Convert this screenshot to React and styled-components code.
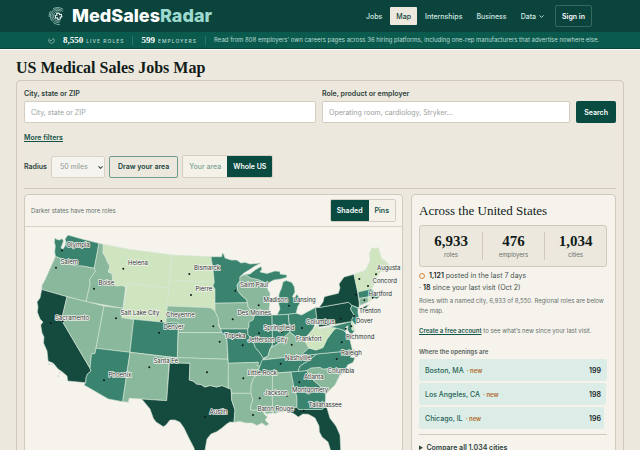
import React, { useState } from "react";
import styled, { createGlobalStyle } from "styled-components";
import { ChevronDown } from "lucide-react";

const sans = `Inter, "Liberation Sans", sans-serif`;
const serif = `"Liberation Serif", Georgia, serif`;

const GlobalStyle = createGlobalStyle`
  * {
    box-sizing: border-box;
  }
  body {
    margin: 0;
    background: #ede8dd;
    font-family: ${sans};
    color: #16332e;
  }
  button, input, select {
    font-family: inherit;
    margin: 0;
  }
  h1, h2, h3, p, dl, dd, ul {
    margin: 0;
    padding: 0;
  }
`;

const Page = styled.div`
  height: 100vh;
  overflow-y: auto;
  scrollbar-width: none;
`;

const Header = styled.header`
  display: flex;
  align-items: center;
  justify-content: space-between;
  height: 32px;
  padding: 0 48px;
  background: #0a443c;
`;

const Brand = styled.a`
  display: flex;
  align-items: center;
  gap: 6px;
  font-size: 18px;
  line-height: 22px;
  font-weight: 800;
  color: #fff;
  text-decoration: none;

  span span {
    color: #9ed9d0;
  }
`;

const Nav = styled.nav`
  display: flex;
  align-items: center;
  gap: 2px;
`;

const NavLink = styled.a`
  display: flex;
  align-items: center;
  gap: 2px;
  height: 18px;
  padding: 0 6px;
  border-radius: 1px;
  font-size: 7px;
  font-weight: 500;
  text-decoration: none;
  color: ${(props) => (props.$active ? "#0a443c" : "#d3e8e2")};
  background: ${(props) => (props.$active ? "#ede8dd" : "transparent")};
`;

const SignIn = styled.button`
  height: 22px;
  margin-left: 2px;
  padding: 0 6px;
  border: 1px solid #34695f;
  border-radius: 2px;
  background: transparent;
  color: #fff;
  font-size: 7px;
  font-weight: 600;
`;

const Strip = styled.div`
  display: flex;
  align-items: center;
  height: 17px;
  padding: 0 48px;
  background: #0b5a4e;
  border-bottom: 1px solid #0a443c;
  box-shadow: 0 1px 0 #fbfaf6;
  color: #b9dad2;
  white-space: nowrap;

  svg {
    flex: none;
  }
`;

const StripStat = styled.div`
  display: flex;
  align-items: baseline;
  gap: 3px;
  margin-left: 8px;
  padding-right: 8px;
  border-right: 1px solid #2c7468;
  font-size: 5px;
  line-height: 8px;
  font-weight: 500;
  letter-spacing: 1px;
  text-transform: uppercase;

  strong {
    font-family: ${serif};
    font-size: 9px;
    letter-spacing: 0;
    color: #fff;
  }
`;

const StripNote = styled.p`
  margin-left: 8px;
  font-size: 6px;
  line-height: 8px;
`;

const Main = styled.main`
  padding: 8px 16px 16px;
`;

const Title = styled.h1`
  margin-bottom: 1px;
  font-family: ${serif};
  font-size: 16px;
  line-height: 22px;
  font-weight: 700;
  color: #111c1a;
`;

const Shell = styled.section`
  padding: 8px 7px;
  border: 1px solid #cfcabb;
  border-radius: 4px;
`;

const SearchRow = styled.form`
  display: grid;
  grid-template-columns: 293fr 249fr auto;
  align-items: end;
  column-gap: 6px;
`;

const Field = styled.div`
  display: flex;
  flex-direction: column;
  gap: 3px;
`;

const Label = styled.label`
  font-size: 7px;
  line-height: 9px;
  font-weight: 600;
  color: #2b3f3b;
`;

const TextInput = styled.input`
  width: 100%;
  height: 22px;
  padding: 0 6px;
  border: 1px solid #d3cebf;
  border-radius: 2px;
  background: #fff;
  font-size: 7px;

  &::placeholder {
    color: #9aa19d;
  }
`;

const PrimaryButton = styled.button`
  height: 22px;
  padding: 0 8px;
  border: 0;
  border-radius: 2px;
  background: #0a4b41;
  color: #fff;
  font-size: 7px;
  font-weight: 600;
`;

const MoreFilters = styled.a`
  display: block;
  width: fit-content;
  margin-top: 10px;
  font-size: 7px;
  line-height: 10px;
  font-weight: 600;
  color: #14534a;
`;

const Controls = styled.div`
  display: flex;
  align-items: center;
  gap: 4px;
  margin-top: 12px;
  padding-bottom: 10px;
  border-bottom: 1px solid #cfcabb;
`;

const SelectBox = styled.div`
  position: relative;
  width: 54px;
  height: 22px;

  svg {
    position: absolute;
    right: 1px;
    top: 8px;
    pointer-events: none;
    color: #4d5855;
  }
`;

const Select = styled.select`
  display: block;
  appearance: none;
  width: 100%;
  height: 22px;
  padding: 0 8px;
  border: 1px solid #d8d3c6;
  border-radius: 2px;
  background: #f6f4ef;
  color: #8c9692;
  font-size: 7px;
  opacity: 1;
`;

const DrawButton = styled.button`
  height: 22px;
  padding: 0 8px;
  border: 1px solid #6f9a90;
  border-radius: 2px;
  background: transparent;
  color: #14443c;
  font-size: 7px;
  font-weight: 600;
`;

const Toggle = styled.div`
  display: flex;
  border: 1px solid #d3cebf;
  border-radius: 2px;
  overflow: hidden;
`;

const ToggleButton = styled.button`
  height: 21px;
  padding: 0 6px;
  border: 0;
  font-size: 7px;
  font-weight: ${(props) => (props.$muted ? 500 : 600)};
  color: ${(props) =>
    props.$on ? "#fff" : props.$muted ? "#7da398" : "#14534a"};
  background: ${(props) => (props.$on ? "#0a4b41" : "#f4f1e8")};
`;

const Columns = styled.div`
  display: grid;
  grid-template-columns: minmax(0, 1fr) 205px;
  gap: 8px;
  align-items: start;
  margin-top: 5px;
`;

const Card = styled.section`
  border: 1px solid #cfcabb;
  border-radius: 4px;
  background: #f6f3ec;
  overflow: hidden;
`;

const MapHead = styled.div`
  display: flex;
  align-items: center;
  justify-content: space-between;
  height: 32px;
  padding: 0 6px;
  border-bottom: 1px solid #d8d3c6;
  font-size: 6px;
  color: #66706d;
`;

const MapSvg = styled.svg`
  display: block;
  width: 100%;
  height: auto;

  text {
    font-family: ${sans};
    font-size: 6px;
    fill: #2b3432;
    stroke: #f3f3ee;
    stroke-width: 1.5px;
    stroke-linejoin: round;
    paint-order: stroke;
  }
`;

const Side = styled(Card)`
  padding: 8px 8px 12px 7px;
`;

const SideTitle = styled.h2`
  font-family: ${serif};
  font-size: 13px;
  line-height: 16px;
  font-weight: 400;
  color: #111c1a;
`;

const Stats = styled.dl`
  display: grid;
  grid-template-columns: repeat(3, 1fr);
  margin-top: 6px;
  padding: 6px 0;
  border: 1px solid #cfcabb;
  border-radius: 3px;
  background: #ede8dd;
`;

const Stat = styled.div`
  display: flex;
  flex-direction: column-reverse;
  text-align: center;

  & + & {
    border-left: 1px solid #cfcabb;
  }

  dt {
    font-size: 6px;
    line-height: 10px;
    color: #66706d;
  }

  dd {
    font-family: ${serif};
    font-size: 15px;
    line-height: 18px;
    font-weight: 700;
    color: #111c1a;
  }
`;

const Recent = styled.div`
  margin-top: 3px;
`;

const Line = styled.p`
  display: flex;
  align-items: center;
  font-size: 7px;
  line-height: 12px;
  white-space: pre;
  color: #44524e;

  strong {
    font-weight: 600;
    color: #16211f;
  }
`;

const Pulse = styled.span`
  width: 6px;
  height: 6px;
  margin-right: 4px;
  border: 1px solid #d9873a;
  border-radius: 50%;
`;

const Note = styled.p`
  margin-top: ${(props) => props.$space}px;
  font-size: 6px;
  line-height: 10px;
  color: #66706d;

  a {
    font-weight: 600;
    color: #14534a;
  }
`;

const ListTitle = styled.h3`
  margin-top: 11px;
  font-size: 6px;
  line-height: 10px;
  font-weight: 600;
  color: #55615d;
`;

const Cities = styled.ul`
  display: grid;
  gap: 2px;
  margin-top: 2px;
  padding-bottom: 5px;
  border-bottom: 1px solid #cfcabb;
  list-style: none;
`;

const City = styled.li`
  position: relative;
  height: 22px;
`;

const Bar = styled.div`
  height: 100%;
  border-radius: 2px;
  background: #dcede7;
`;

const CityLink = styled.a`
  position: absolute;
  inset: 0;
  display: flex;
  align-items: center;
  gap: 3px;
  padding: 0 6px;
  font-size: 7px;
  font-weight: 500;
  text-decoration: none;
  color: #1f6254;

  em {
    font-size: 6px;
    font-style: normal;
    font-weight: 600;
    color: #b0692c;
  }

  strong {
    margin-left: auto;
    font-weight: 600;
    color: #16211f;
  }
`;

const Compare = styled.details`
  margin-top: 8px;
  font-size: 7px;
  line-height: 10px;
  font-weight: 600;
  color: #2b3f3b;
`;

const shades = ["#cfe5bf", "#8ab89c", "#3a846f", "#144b3e"];

// [abbreviation, shade, outline]
const states = [
  ["WA", 2, "55,238 57,239.5 60,240 62,238.5 63.5,241 62,245 61,248 63,249 65,246 66,242 65,239 66.5,237 68,235 82,239 99,243.3 94.3,268.3 82,266 76,266 70,264 65,263.5 62,259 55.5,256.5 54.7,252 55.3,246 54.3,242"],
  ["OR", 1, "55.5,256.5 62,259 65,263.5 70,264 76,266 82,266 94.3,268.3 95.5,271 93,275 89.3,280 90.3,283 86,301.7 67,296.7 41.7,289.5 42,285 45,280 49,271 53,262"],
  ["ID", 1, "99,243.3 103.3,244.3 103,253 106,258 107.5,262 110,266 108.3,272 112,273.5 113,281 115.5,286 122,285.5 125.7,286.7 123,308.3 86,301.7 90.3,283 89.3,280 95.5,271 94.3,268.3"],
  ["MT", 0, "103.3,244.3 130,249.5 160,253.3 171.7,255 169,288.3 127.3,283.3 125.7,286.7 122,285.5 115.5,286 113,281 112,273.5 108.3,272 110,266 107.5,262 106,258 103,253"],
  ["WY", 0, "127.3,283.3 169,288.3 166,322.5 121.7,317.7"],
  ["CA", 3, "41.7,289.5 67,296.7 61.5,320 90,368.3 91,371 87.5,374 86,378 85.7,382.7 67.7,381 67,376 62,371.7 58,369 53.3,363.3 48,361 47.7,357 47,351 43.5,343 44,337 42,333 40.7,325 43,322 40,319 37.3,312 38,307 37,302 40,298"],
  ["NV", 1, "67,296.7 104,306 96,348.3 95,353.5 91.5,354 90,368.3 61.5,320"],
  ["UT", 1, "104,306 123,308.3 121.7,317.7 133.7,319.5 130,352.3 96,348.3"],
  ["CO", 2, "133.7,319.3 166,322.5 178.3,322.9 177.3,357.7 130,352.3"],
  ["AZ", 2, "96,348.3 130,352.3 122.7,401.7 108.3,399 84,385 86,382 86,378 87.5,374 91,371 90,368.3 91.5,354 95,353.5"],
  ["NM", 1, "130,352.3 170,357.3 169,363 166.7,400.7 141.7,399 129,398.3 128.5,402.3 122.7,401.7"],
  ["TX", 3, "169.5,362.7 190,363.3 189.3,380 193,381 196.7,384 201,384.5 205,387 210,385.5 216.7,387 222,385.5 231,389 231.7,400 235,410 234,422.3 230,422 226.7,424 222,428 216.7,431.7 211,434 207,439 205,450 207,462 196,458 194,448 188.3,437 184,428 180,422.3 175,420 170,420 166,425 163.3,426.7 156,422 153.3,418.3 150,409 141.7,399 166.7,400.7"],
  ["ND", 0, "171.7,255 211,256.7 211.5,263 213.3,271.7 214.3,282.3 170,280"],
  ["SD", 0, "170,280 214.3,282.3 213,286 215,289 215,311 211,308 206.7,307.5 167.3,306"],
  ["NE", 1, "167.3,306 206.7,307.5 211,308 215,311 218.3,318.3 218.5,325 222,332.7 178.3,332.5 178.3,322.9 166,322.5"],
  ["KS", 1, "178.3,332.5 222,332.7 225,335 227,340 227.7,359.3 177.3,357.7"],
  ["OK", 1, "170,357.3 227.7,359.3 228.5,365 228.3,388.3 222,385.5 216.7,387 210,385.5 205,387 201,384.5 196.7,384 193,381 189.3,380 190,363.3 169.5,362.7"],
  ["MN", 2, "211,256.7 221.7,256.7 222.3,253.3 223.7,254 225,258 231,260 236.7,260 241,263 245,262.3 250,264 261,263 255,266 249,270 244,273 240,276.7 240,281 237,285 238,291 242,296 246,299 247.7,302.7 215,303.3 215,289 213,286 214.3,282.3 213.3,271.7"],
  ["IA", 1, "215,303.3 247.7,302.7 248,307 251.5,311 254.5,315.5 253,320 249,322 249,327 247.7,329 220.5,329 218.5,323 218.3,318.3 215,311"],
  ["MO", 2, "220.5,329 247.7,329 248,335 253,340 255,347 260,353 263.3,358.3 260,366 257.5,366 258.3,362.3 228.3,363.3 227,340 225,335 222,332.7"],
  ["AR", 1, "228.3,363.3 258.3,362.3 257.5,366 260,366 257,373 253.3,379 251,386 251,393.3 231.7,393.3 231,389 228.3,388.3"],
  ["LA", 1, "231.7,393.3 251,393.3 253,400 251,405 250.5,410 263.3,410 264,414 267.5,417 265,420 269,424 266,426 262,423 257,425.5 252,423 246,423 240,421.5 234,422.3 235,410 231.7,400"],
  ["WI", 1, "240,276.7 245,274.5 251,278 258,279.5 264,282 267,285 268,290 270,293 270,300 269,310.5 251.5,311 248,307 247.7,302.7 246,299 242,296 238,291 237,285 240,281"],
  ["IL", 2, "251.5,311 269,310.5 272,315 272.5,338 272.3,345 270,349 268,356 263.3,358.3 260,353 255,347 253,340 248,335 247.7,329 249,327 249,322 253,320 254.5,315.5"],
  ["MI", 2, "245,274.5 250,274 255,270 261,266.5 262,269 260,272 267,273.5 275,271 280,271.5 280,274 287,275 286.5,277.5 281,279 274,280 270,282 267,285 264,282 258,279.5 251,278"],
  ["MI", 2, "283,282 286,280.5 291.7,282.3 294.3,286.7 295,292 292.5,296.5 294,298 297,294.3 300,299 300,303 298,306 296,313.5 288.3,314.3 277,315 280,309 278.3,302 279,294 281.5,288"],
  ["IN", 2, "272,315 277,315 288.3,314.3 290,332 284,337 281,342 272.3,347 272.5,338"],
  ["OH", 2, "288.3,314.3 296,313.3 301.7,315 307,312 315.5,307.5 317,320 313,329 307,336 303,339 296,337 290,332"],
  ["KY", 1, "290,332 296,337 303,339 306,343 309,348 300,356 263.3,359.5 268,356 270,349 272.3,347 281,342 284,337"],
  ["TN", 2, "262,360 300,356 317,354 308,361 300,366 298,371.5 257,374 260,366"],
  ["MS", 1, "257,374 272.5,373.3 272.3,398 273,413 266,414 263.3,410 250.5,410 251,405 253,400 251,393.3 251,386 253.3,379"],
  ["AL", 1, "272.5,373.3 291,372 294,387 297,397 297,407.5 278,409 279,412 275,413.5 273,413 272.3,398"],
  ["GA", 2, "291,372 306.7,370.5 311,378 320,386 325.7,394 325,407 322,409.5 298.5,409.5 297,407.5 297,397 294,387"],
  ["FL", 3, "278,409 297,407.5 298.5,409.5 322,409.5 325,407 327,408 330,418.3 336,426 340,435 340.7,450 338,458 332,455 328,442 322,437 319.3,431.7 319,426 315,418 308.3,414.3 303,414 298.3,417 293.3,413.3 285,411 279,412"],
  ["SC", 1, "306.7,370.5 311,368 320,367.3 323,369 329,368.5 340,375 335,385 325.7,394 320,386 311,378"],
  ["NC", 2, "317,354 352.5,350.5 354,354 350,357 355,358 353,362.5 347.5,365 346,371 340,375 329,368.5 323,369 320,367.3 311,368 306.7,370.5 298,371.5 300,366 308,361"],
  ["VA", 2, "300,356 309,348 316,350 323,347.5 327,339 333,331 336,328 343,330 347,334 346,337 350,340 352.5,350.5 317,354"],
  ["WV", 0, "317,325 319,329 330,327 337,327.5 333,331 327,339 323,347.5 316,350 309,348 306,343 307,336 313,330"],
  ["MD", 2, "330,327 351.5,321.5 352,330 355,330.5 351,335 347.5,330 348,325.5 345,328 346,332 343,330 336,328"],
  ["DE", 0, "351.5,321.5 353,322 355,330.5 352,330"],
  ["PA", 3, "315.5,307.5 319,307.5 348.3,302.3 352,305.5 350.5,309 354,315 351.5,321.5 319,327 317,320"],
  ["NY", 3, "319,307.5 323,302 324.3,296.7 331,295 338.3,293.3 340,288 339,284 344,277 354,274.3 357.3,290 359.3,303 359,308 352,305.5 348.3,302.3"],
  ["NJ", 2, "352,305.5 358,308 358,313 359,318 355.5,325 351.5,320 354,315 350.5,309"],
  ["LI", 3, "360,308.5 369,304.5 366,308 361,310"],
  ["VT", 0, "354,274.3 365,270.5 361.5,291 358,292 357.3,290"],
  ["NH", 0, "365,270.5 366.3,268.5 373,287 371,289 361.5,291"],
  ["ME", 0, "366.3,268.5 370,261 369.5,253 372,247.7 375,248.5 378.3,247.7 381.7,259 384.5,260 390,266 383,272 381,271 377,277 375,282 373,287"],
  ["MA", 2, "358,292 371,289 374,291 373,293.5 376,296.5 380,296 377,299 370,296.5 359,298.5"],
  ["CT", 1, "359,298.5 368,297 368.5,302 360,305.5"],
  ["RI", 0, "368,297 371,296.8 371.5,300 368.5,302"],
];

const capitals = [
  ["Olympia", 66.5, 246.5], ["Salem", 60.5, 264], ["Helena", 128, 265],
  ["Boise", 98.5, 285], ["Salt Lake City", 120.5, 314.5],
  ["Sacramento", 55, 319.5], ["Phoenix", 108.5, 376.5],
  ["Santa Fe", 153.5, 362.5], ["Bismarck", 194, 270], ["Pierre", 195.5, 291],
  ["Cheyenne", 166, 317], ["Denver", 163.5, 328.5], ["Topeka", 224.5, 337.5],
  ["Des Moines", 237.5, 315], ["Saint Paul", 240, 286.5],
  ["Madison", 263.5, 301.5], ["Springfield", 263.5, 330],
  ["Jefferson City", 247.5, 341.5], ["Little Rock", 247.5, 374.5],
  ["Jackson", 264, 395], ["Baton Rouge", 257.5, 410.5],
  ["Austin", 209.5, 413.5], ["Lansing", 293.5, 301.5],
  ["Augusta", 377, 270], ["Concord", 372.5, 282.5],
  ["Hartford", 368.5, 296], ["Trenton", 359, 312.5], ["Dover", 356, 322.5],
  ["Columbus", 306, 323.5], ["Frankfort", 296, 340.5],
  ["Richmond", 346, 338.5], ["Nashville", 285, 359.5],
  ["Raleigh", 341, 354.5], ["Columbia", 327.5, 373], ["Atlanta", 304, 378.5],
  ["Montgomery", 292, 392], ["Tallahassee", 308.5, 407],
];

const dots = [
  [62, 250.5], [56, 267.7], [123.3, 268.7], [94, 288.7], [50.7, 323],
  [62.7, 321.3], [116, 318.3], [159, 332.7], [104, 380.3], [149.3, 367.3],
  [189.3, 274], [191, 295], [161.3, 321], [213.3, 326.3], [219.7, 341.7],
  [232.7, 319.3], [235.3, 290.7], [258.7, 305.3], [259, 333.3], [281.7, 332],
  [289, 305.7], [242.7, 345.3], [207, 372.3], [243.3, 378.3], [259.7, 398.3],
  [253, 415], [205, 417], [280.7, 363.7], [287, 395.7], [359.3, 279],
  [376, 274.3], [368, 286], [372.7, 292.7], [356, 294.7], [364.3, 300.3],
  [372.7, 297.7], [354, 316], [340.7, 318.7], [351.3, 326.3], [345.7, 328.7],
  [302, 328], [291.7, 344.7], [312.7, 340], [341.7, 342.3], [336.7, 359],
  [322.7, 377], [299.3, 382.3], [303.7, 410.7],
];

const cities = [
  { name: "Boston, MA", roles: 199 },
  { name: "Los Angeles, CA", roles: 198 },
  { name: "Chicago, IL", roles: 196 },
];

const Logo = () => (
  <svg width="18" height="20" viewBox="0 0 18 20" fill="none" stroke="#b9ddd4">
    <g strokeWidth="0.7" strokeLinecap="round">
      <path d="M5.4 2.6C8.6.9 12.6 1.2 15 3.4" />
      <path d="M14.6 5.2C11.6 2 6.8 2.2 4.2 5.2C1.8 8.2 1.8 12.4 4.2 15.2" />
      <path d="M5.4 16.6C7 17.8 9 18.6 11.4 18.6" />
      <path d="M12.6 5.2C10 3.6 7 4.2 5.2 6.4C3.4 8.8 3.6 12 5.4 14.2C6.8 15.8 8.6 16.6 11 16.4" />
      <path d="M10 5.8C8 5.8 6.4 7 5.8 8.8C5.2 11 6 13 7.8 14.2C9 15 10.4 15.2 12 14.8" />
      <path d="M2.4 5.4C1.4 7 1 8.6 1.2 10.6" />
    </g>
    <path
      d="M9.2 7.2h2.6v1.7h1.9v2.6h-1.9v1.7H9.2v-1.7H7.4V8.9h1.8z"
      stroke="#fff"
      strokeWidth="1"
      transform="rotate(-12 10.5 10.2)"
    />
  </svg>
);

const RadarIcon = () => (
  <svg width="7" height="7" viewBox="0 0 7 7" fill="none" stroke="#a5cdc4">
    <path d="M1.4 1.6A2.8 2.8 0 1 0 5.5 1.5M3.5 3.6L1.6 3.6M3.5 3.6L5.2 1.5" strokeWidth="0.7" />
  </svg>
);

const UsMap = () => (
  <MapSvg viewBox="25 227 377 250" role="img" aria-label="Roles by state">
    {states.map(([id, shade, points], i) => (
      <polygon
        key={id + i}
        points={points}
        fill={shades[shade]}
        stroke="#d5e5d6"
        strokeWidth="0.6"
        strokeLinejoin="round"
      />
    ))}
    <g fill="#8ab89c">
      <circle cx="49" cy="364" r="0.6" />
      <circle cx="52" cy="364.5" r="0.5" />
      <circle cx="60" cy="372.5" r="0.6" />
      <circle cx="58.5" cy="376" r="0.6" />
    </g>
    {dots.map(([x, y]) => (
      <circle key={`${x}-${y}`} cx={x} cy={y} r="1" fill="#0b1a17" />
    ))}
    {capitals.map(([name, x, y]) => (
      <text key={name} x={x} y={y}>
        {name}
      </text>
    ))}
  </MapSvg>
);

const App = () => {
  const [view, setView] = useState("shaded");

  return (
    <Page>
      <GlobalStyle />
      <Header>
        <Brand href="#">
          <Logo />
          <span>
            MedSales<span>Radar</span>
          </span>
        </Brand>
        <Nav>
          <NavLink href="#">Jobs</NavLink>
          <NavLink href="#" $active>
            Map
          </NavLink>
          <NavLink href="#">Internships</NavLink>
          <NavLink href="#">Business</NavLink>
          <NavLink href="#">
            Data <ChevronDown size={7} strokeWidth={3} />
          </NavLink>
          <SignIn type="button">Sign in</SignIn>
        </Nav>
      </Header>
      <Strip>
        <RadarIcon />
        <StripStat>
          <strong>8,550</strong> live roles
        </StripStat>
        <StripStat>
          <strong>599</strong> employers
        </StripStat>
        <StripNote>
          Read from 808 employers’ own careers pages across 36 hiring
          platforms, including one-rep manufacturers that advertise nowhere
          else.
        </StripNote>
      </Strip>
      <Main>
        <Title>US Medical Sales Jobs Map</Title>
        <Shell>
          <SearchRow onSubmit={(e) => e.preventDefault()}>
            <Field>
              <Label htmlFor="place">City, state or ZIP</Label>
              <TextInput id="place" placeholder="City, state or ZIP" />
            </Field>
            <Field>
              <Label htmlFor="query">Role, product or employer</Label>
              <TextInput
                id="query"
                placeholder="Operating room, cardiology, Stryker..."
              />
            </Field>
            <PrimaryButton type="submit">Search</PrimaryButton>
          </SearchRow>
          <MoreFilters href="#">More filters</MoreFilters>
          <Controls>
            <Label htmlFor="radius">Radius</Label>
            <SelectBox>
              <Select id="radius" disabled>
                <option>50 miles</option>
              </Select>
              <ChevronDown size={7} strokeWidth={4} />
            </SelectBox>
            <DrawButton type="button">Draw your area</DrawButton>
            <Toggle>
              <ToggleButton type="button" $muted>
                Your area
              </ToggleButton>
              <ToggleButton type="button" $on>
                Whole US
              </ToggleButton>
            </Toggle>
          </Controls>
          <Columns>
            <Card>
              <MapHead>
                <span>Darker states have more roles</span>
                <Toggle>
                  <ToggleButton
                    type="button"
                    $on={view === "shaded"}
                    onClick={() => setView("shaded")}
                  >
                    Shaded
                  </ToggleButton>
                  <ToggleButton
                    type="button"
                    $on={view === "pins"}
                    onClick={() => setView("pins")}
                  >
                    Pins
                  </ToggleButton>
                </Toggle>
              </MapHead>
              <UsMap />
            </Card>
            <Side>
              <SideTitle>Across the United States</SideTitle>
              <Stats>
                <Stat>
                  <dt>roles</dt>
                  <dd>6,933</dd>
                </Stat>
                <Stat>
                  <dt>employers</dt>
                  <dd>476</dd>
                </Stat>
                <Stat>
                  <dt>cities</dt>
                  <dd>1,034</dd>
                </Stat>
              </Stats>
              <Recent>
                <Line>
                  <Pulse />
                  <strong>1,121</strong> posted in the last 7 days
                </Line>
                <Line>
                  · <strong>18</strong> since your last visit (Oct 2)
                </Line>
              </Recent>
              <Note $space={2}>
                Roles with a named city, 6,933 of 8,550. Regional roles are
                below the map.
              </Note>
              <Note $space={10}>
                <a href="#">Create a free account</a> to see what’s new since
                your last visit.
              </Note>
              <ListTitle>Where the openings are</ListTitle>
              <Cities>
                {cities.map((city) => (
                  <City key={city.name}>
                    <Bar style={{ width: `${(city.roles / 199) * 100}%` }} />
                    <CityLink href="#">
                      {city.name} <em>· new</em>
                      <strong>{city.roles}</strong>
                    </CityLink>
                  </City>
                ))}
              </Cities>
              <Compare>
                <summary>Compare all 1,034 cities</summary>
              </Compare>
            </Side>
          </Columns>
        </Shell>
      </Main>
    </Page>
  );
};

export default App;
